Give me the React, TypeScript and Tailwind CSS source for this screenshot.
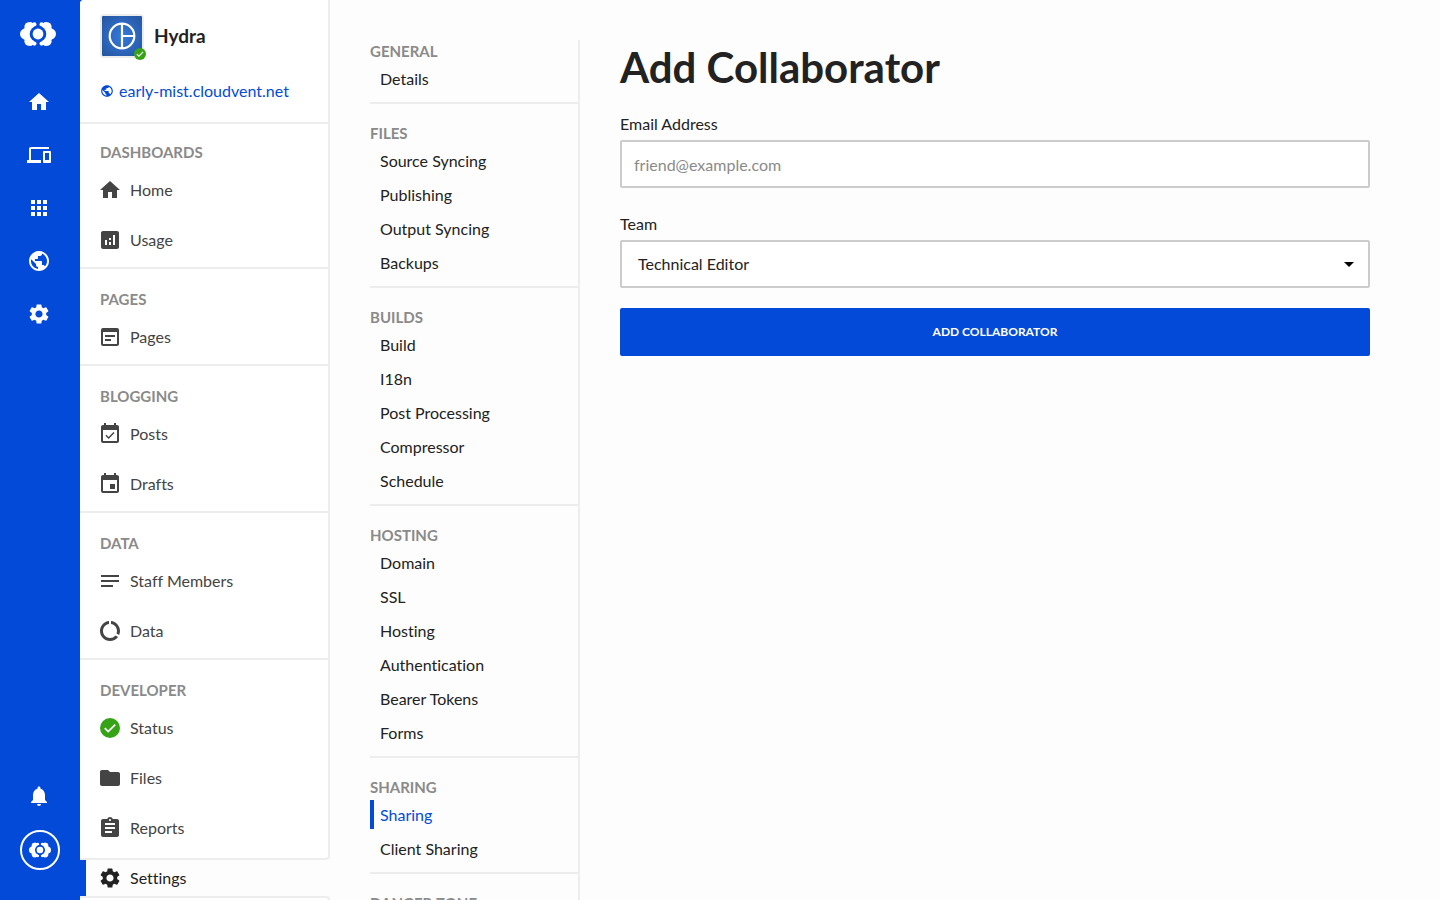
import type { ReactNode } from "react";
import type { IconType } from "react-icons";
import {
  MdAnalytics,
  MdApps,
  MdAssignment,
  MdDataUsage,
  MdDevices,
  MdEvent,
  MdEventAvailable,
  MdFolder,
  MdHome,
  MdNotes,
  MdNotifications,
  MdPublic,
  MdSettings,
  MdWysiwyg,
} from "react-icons/md";

function CloudLogo({ className }: { className: string }) {
  return (
    <svg viewBox="0 0 36 24" className={className} aria-hidden="true">
      <g fill="#fff">
        <circle cx="5.8" cy="12" r="5.8" />
        <circle cx="9" cy="4.8" r="4.6" />
        <circle cx="9" cy="19.2" r="4.6" />
        <path d="M4 7 9 .3h2.5l3 2v19.4l-3 2H9L4 17z" />
        <circle cx="14.4" cy="2.4" r="2.1" />
        <circle cx="14.4" cy="21.6" r="2.1" />
        <circle cx="30.2" cy="12" r="5.8" />
        <circle cx="27" cy="4.8" r="4.6" />
        <circle cx="27" cy="19.2" r="4.6" />
        <path d="M32 7 27 .3h-2.5l-3 2v19.4l3 2H27l5-6.7z" />
        <circle cx="21.6" cy="2.4" r="2.1" />
        <circle cx="21.6" cy="21.6" r="2.1" />
      </g>
      <circle cx="18" cy="12" r="8.3" fill="#034ad8" />
      <circle cx="18" cy="12" r="5.4" fill="#fff" />
    </svg>
  );
}

function CheckBadge({ className }: { className: string }) {
  return (
    <svg viewBox="0 0 20 20" className={className} aria-hidden="true">
      <circle cx="10" cy="10" r="10" fill="#36a317" />
      <path d="m4.8 10.2 3.4 3.4 7-7" fill="none" stroke="#fff" strokeWidth="1.8" />
    </svg>
  );
}

function StatusIcon() {
  return (
    <span className="flex size-6 items-center justify-center">
      <CheckBadge className="size-5" />
    </span>
  );
}

type Item = { label: string; icon: IconType | typeof StatusIcon };
type Group = { title: string; items: Item[] };

const siteGroups: Group[] = [
  { title: "DASHBOARDS", items: [{ label: "Home", icon: MdHome }, { label: "Usage", icon: MdAnalytics }] },
  { title: "PAGES", items: [{ label: "Pages", icon: MdWysiwyg }] },
  { title: "BLOGGING", items: [{ label: "Posts", icon: MdEventAvailable }, { label: "Drafts", icon: MdEvent }] },
  { title: "DATA", items: [{ label: "Staff Members", icon: MdNotes }, { label: "Data", icon: MdDataUsage }] },
  {
    title: "DEVELOPER",
    items: [
      { label: "Status", icon: StatusIcon },
      { label: "Files", icon: MdFolder },
      { label: "Reports", icon: MdAssignment },
    ],
  },
];

const settingsGroups = [
  { title: "GENERAL", items: ["Details"] },
  { title: "FILES", items: ["Source Syncing", "Publishing", "Output Syncing", "Backups"] },
  { title: "BUILDS", items: ["Build", "I18n", "Post Processing", "Compressor", "Schedule"] },
  { title: "HOSTING", items: ["Domain", "SSL", "Hosting", "Authentication", "Bearer Tokens", "Forms"] },
  { title: "SHARING", items: ["Sharing", "Client Sharing"] },
  { title: "DANGER ZONE", items: ["Delete Site"] },
];

const railLinks: { label: string; icon: IconType }[] = [
  { label: "Home", icon: MdHome },
  { label: "Sites", icon: MdDevices },
  { label: "Apps", icon: MdApps },
  { label: "Domains", icon: MdPublic },
  { label: "Settings", icon: MdSettings },
];

function RailLink({ label, children }: { label: string; children: ReactNode }) {
  return (
    <a href="#" aria-label={label} className="flex w-[38px] justify-center text-white">
      {children}
    </a>
  );
}

function Rail() {
  return (
    <nav aria-label="Main" className="flex w-20 shrink-0 flex-col px-5 pt-[22px] pb-[30px]">
      <a href="#" aria-label="Dashboard">
        <CloudLogo className="h-6 w-9" />
      </a>
      <div className="mt-11 flex flex-col gap-[29px]">
        {railLinks.map(({ label, icon: Icon }) => (
          <RailLink key={label} label={label}>
            <Icon className="size-6" />
          </RailLink>
        ))}
      </div>
      <div className="mt-auto flex flex-col gap-[22px]">
        <RailLink label="Notifications">
          <MdNotifications className="size-6" />
        </RailLink>
        <a
          href="#"
          aria-label="Account"
          className="flex size-10 items-center justify-center rounded-full border-2 border-white"
        >
          <CloudLogo className="h-4 w-[22px]" />
        </a>
      </div>
    </nav>
  );
}

function SiteSidebar() {
  return (
    <aside className="flex w-[250px] shrink-0 flex-col overflow-hidden rounded-tl bg-[#fdfdfd]">
      <div className="shrink-0 rounded-br border-r-2 border-b-2 border-[#ededed] bg-white">
        <header className="flex flex-col gap-5 border-b-2 border-[#ededed] px-5 pt-3.5 pb-[18px]">
          <div className="flex items-center gap-2.5">
            <div className="relative size-11 rounded-sm border-2 border-[#ededed]">
              <svg viewBox="0 0 40 40" className="size-full" aria-hidden="true">
                <defs>
                  <radialGradient id="site-icon" r="0.7">
                    <stop offset="0" stopColor="#3679dc" />
                    <stop offset="1" stopColor="#24559f" />
                  </radialGradient>
                </defs>
                <rect width="40" height="40" rx="1" fill="url(#site-icon)" />
                <g fill="none" stroke="#fff" strokeWidth="2.2">
                  <circle cx="20" cy="20" r="12.3" />
                  <path d="M20 7.7v24.6M20 20h12.3" />
                </g>
              </svg>
              <CheckBadge className="absolute -right-1 -bottom-1 size-3" />
            </div>
            <h2 className="text-[19px] leading-6 font-bold text-[#222]">Hydra</h2>
          </div>
          <a href="#" className="flex h-[26px] items-center gap-[5px] text-[#034ad8]">
            <MdPublic className="size-3.5" />
            early-mist.cloudvent.net
          </a>
        </header>
        {siteGroups.map((group) => (
          <section
            key={group.title}
            className="border-b-2 border-[#ededed] px-5 pt-5 pb-[7px] first-of-type:pt-[18px] last:border-b-0 last:pb-2.5"
          >
            <h3 className="text-[15px] leading-5 font-bold text-[#8a8a8a]">{group.title}</h3>
            <ul className="mt-2 flex flex-col gap-2.5">
              {group.items.map(({ label, icon: Icon }) => (
                <li key={label}>
                  <a href="#" className="-ml-0.5 flex h-10 items-center gap-2 text-[#444]">
                    <Icon className="size-6" />
                    {label}
                  </a>
                </li>
              ))}
            </ul>
          </section>
        ))}
      </div>
      <a
        href="#"
        aria-current="page"
        className="flex h-9 shrink-0 items-center gap-2 border-l-6 border-[#034ad8] pl-3 text-[#222]"
      >
        <MdSettings className="size-6" />
        Settings
      </a>
      <div className="min-h-2 grow rounded-tr border-t-2 border-r-2 border-[#ededed] bg-white" />
    </aside>
  );
}

function SettingsNav() {
  return (
    <nav aria-label="Site settings" className="w-[210px] shrink-0 self-start border-r-2 border-[#ededed]">
      {settingsGroups.map((group) => (
        <section key={group.title} className="border-b-2 border-[#ededed] pt-[18px] pb-[9px] first:pt-0">
          <h3 className="text-[15px] leading-[22px] font-bold text-[#8a8a8a]">{group.title}</h3>
          <ul className="mt-0.5 flex flex-col gap-[5px]">
            {group.items.map((label) => (
              <li key={label}>
                <a
                  href="#"
                  aria-current={label === "Sharing" ? "page" : undefined}
                  className="block border-l-4 border-transparent pl-1.5 leading-[29px] text-[#222] aria-[current=page]:border-[#034ad8] aria-[current=page]:text-[#034ad8]"
                >
                  {label}
                </a>
              </li>
            ))}
          </ul>
        </section>
      ))}
    </nav>
  );
}

function CollaboratorForm() {
  return (
    <main className="min-w-0 flex-1">
      <h1 className="text-[42px] leading-[54px] font-bold text-[#222]">Add Collaborator</h1>
      <form className="mt-[18px] flex flex-col gap-5" onSubmit={(event) => event.preventDefault()}>
        <div>
          <label htmlFor="email" className="mb-1 block leading-6">
            Email Address
          </label>
          <input
            id="email"
            type="email"
            placeholder="friend@example.com"
            className="h-12 w-full rounded-xs border-2 border-[#ccc] bg-white px-3 placeholder:text-[#8a8a8a]"
          />
        </div>
        <div className="pt-1">
          <label htmlFor="team" className="mb-1 block leading-6">
            Team
          </label>
          <div className="relative">
            <select
              id="team"
              className="h-12 w-full appearance-none rounded-xs border-2 border-[#ccc] bg-white px-4"
            >
              <option>Technical Editor</option>
            </select>
            <svg viewBox="0 0 10 5" className="absolute top-[22px] right-4 h-[5px] w-2.5" aria-hidden="true">
              <path d="M0 0h10L5 5z" />
            </svg>
          </div>
        </div>
        <button type="submit" className="h-12 rounded-xs bg-[#034ad8] text-xs font-bold text-white">
          ADD COLLABORATOR
        </button>
      </form>
    </main>
  );
}

export default function App() {
  return (
    <div className="flex h-screen overflow-hidden bg-[#034ad8] font-['Lato',sans-serif] text-base text-[#222] [font-variant-ligatures:none]">
      <Rail />
      <SiteSidebar />
      <div className="flex min-w-0 flex-1 gap-10 overflow-hidden bg-[#fdfdfd] pt-10 pr-[70px] pl-10">
        <SettingsNav />
        <CollaboratorForm />
      </div>
    </div>
  );
}
